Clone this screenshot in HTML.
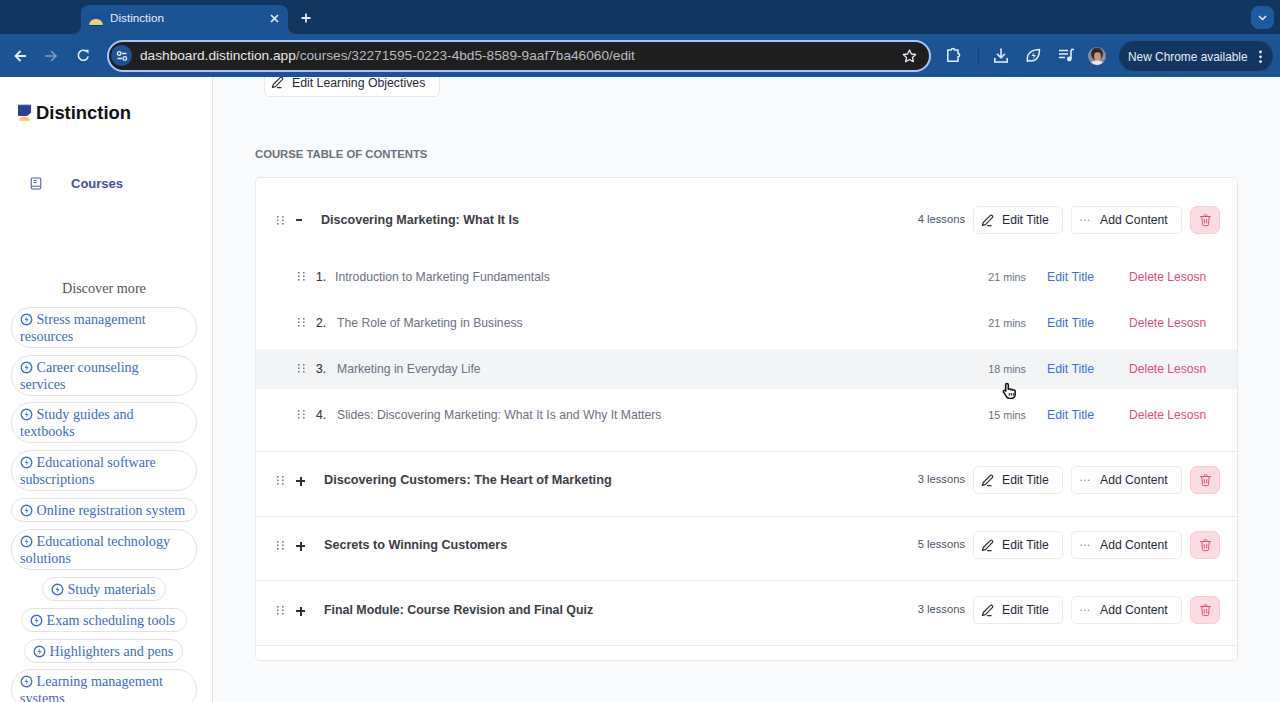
<!DOCTYPE html><html><head><meta charset="utf-8"><style>
*{margin:0;padding:0;box-sizing:border-box}
html,body{width:1280px;height:702px;overflow:hidden;background:#f9fafb;font-family:"Liberation Sans",sans-serif}
.abs{position:absolute}
.t{white-space:nowrap;position:absolute;line-height:1}
.chip{position:absolute;border:1px solid #e3e3e3;border-radius:20px;font-family:"Liberation Serif",serif;font-size:14.1px;color:#416dba;line-height:16.5px;padding:3px 7px 0 8px;background:#fff}
.chip svg{vertical-align:-2px;margin-right:0}
.nw{white-space:nowrap}
.sep{position:absolute;left:256px;width:981px;height:1px;background:#e9eaed}
.mtitle{font-size:12.7px;font-weight:bold;color:#3a3d44}
.btn{position:absolute;height:28px;border:1px solid #ececef;border-radius:5px;background:#fff}
.btxt{font-size:12.2px;color:#1f2937}
.del{position:absolute;width:30px;height:28px;border-radius:7px;background:#fcdce2;border:1px solid #f6cbd3}
.cnt{font-size:11.2px;color:#4b5563}
.ltitle{font-size:12.2px;color:#6b7280}
.lnum{font-size:12px;color:#363a42;-webkit-text-stroke:0.15px #363a42}
.mins{font-size:10.8px;color:#6b7280}
.edit{font-size:12.3px;color:#3a72d2}
.dell{font-size:12.1px;color:#dc4d83}
</style></head><body>
<div class="abs" style="left:0;top:77px;width:213px;height:625px;background:#fff;border-right:1px solid #e6e7ea"></div>
<svg class="abs" style="left:17px;top:104px" width="15" height="17" viewBox="0 0 15 17"><path d="M1.5 1.2h12v7.5l-3.5 2.8H1.5z" fill="#2c3f93" stroke="#2c3f93" stroke-width="1" stroke-linejoin="round"/><path d="M2 16.8c0-2.6 2.4-4.4 5.5-4.4s5.5 1.8 5.5 4.4z" fill="#f3c766"/></svg>
<div class="t" style="left:36px;top:104px;font-size:18.4px;font-weight:bold;color:#111">Distinction</div>
<svg class="abs" style="left:30px;top:177px" width="12" height="13" viewBox="0 0 12 13"><rect x="1.2" y="1" width="9.6" height="11" rx="1.5" fill="none" stroke="#4a5a9a" stroke-width="1.1"/><path d="M3.3 3.6h3.4M3.3 5.6h3.4M1.5 9.2h9" stroke="#4a5a9a" stroke-width="1"/></svg>
<div class="t" style="left:71px;top:177px;font-size:13px;font-weight:bold;color:#454f97">Courses</div>
<div class="t" style="left:62px;top:281px;font-family:'Liberation Serif',serif;font-size:14.2px;color:#555">Discover more</div>
<div class="chip" style="left:11px;top:307px;width:186px;height:41px"><svg width="13" height="13" viewBox="-0.4 -0.4 12.8 12.8"><circle cx="6" cy="6" r="5.2" fill="none" stroke="#416dba" stroke-width="1.35"/><path d="M6.6 2.8L4.2 6.6h1.9L5.5 9.2l2.4-3.8H6z" fill="#416dba"/></svg> Stress management<br>resources</div>
<div class="chip" style="left:11px;top:355px;width:186px;height:41px"><svg width="13" height="13" viewBox="-0.4 -0.4 12.8 12.8"><circle cx="6" cy="6" r="5.2" fill="none" stroke="#416dba" stroke-width="1.35"/><path d="M6.6 2.8L4.2 6.6h1.9L5.5 9.2l2.4-3.8H6z" fill="#416dba"/></svg> Career counseling<br>services</div>
<div class="chip" style="left:11px;top:402px;width:186px;height:41px"><svg width="13" height="13" viewBox="-0.4 -0.4 12.8 12.8"><circle cx="6" cy="6" r="5.2" fill="none" stroke="#416dba" stroke-width="1.35"/><path d="M6.6 2.8L4.2 6.6h1.9L5.5 9.2l2.4-3.8H6z" fill="#416dba"/></svg> Study guides and<br>textbooks</div>
<div class="chip" style="left:11px;top:450px;width:186px;height:41px"><svg width="13" height="13" viewBox="-0.4 -0.4 12.8 12.8"><circle cx="6" cy="6" r="5.2" fill="none" stroke="#416dba" stroke-width="1.35"/><path d="M6.6 2.8L4.2 6.6h1.9L5.5 9.2l2.4-3.8H6z" fill="#416dba"/></svg> Educational software<br>subscriptions</div>
<div class="chip nw" style="left:11px;top:498px;width:186px;height:24px"><svg width="13" height="13" viewBox="-0.4 -0.4 12.8 12.8"><circle cx="6" cy="6" r="5.2" fill="none" stroke="#416dba" stroke-width="1.35"/><path d="M6.6 2.8L4.2 6.6h1.9L5.5 9.2l2.4-3.8H6z" fill="#416dba"/></svg> Online registration system</div>
<div class="chip" style="left:11px;top:529px;width:186px;height:41px"><svg width="13" height="13" viewBox="-0.4 -0.4 12.8 12.8"><circle cx="6" cy="6" r="5.2" fill="none" stroke="#416dba" stroke-width="1.35"/><path d="M6.6 2.8L4.2 6.6h1.9L5.5 9.2l2.4-3.8H6z" fill="#416dba"/></svg> Educational technology<br>solutions</div>
<div class="chip nw" style="left:42px;top:577px;width:124px;height:24px"><svg width="13" height="13" viewBox="-0.4 -0.4 12.8 12.8"><circle cx="6" cy="6" r="5.2" fill="none" stroke="#416dba" stroke-width="1.35"/><path d="M6.6 2.8L4.2 6.6h1.9L5.5 9.2l2.4-3.8H6z" fill="#416dba"/></svg> Study materials</div>
<div class="chip nw" style="left:21px;top:608px;width:166px;height:24px"><svg width="13" height="13" viewBox="-0.4 -0.4 12.8 12.8"><circle cx="6" cy="6" r="5.2" fill="none" stroke="#416dba" stroke-width="1.35"/><path d="M6.6 2.8L4.2 6.6h1.9L5.5 9.2l2.4-3.8H6z" fill="#416dba"/></svg> Exam scheduling tools</div>
<div class="chip nw" style="left:24px;top:639px;width:159px;height:24px"><svg width="13" height="13" viewBox="-0.4 -0.4 12.8 12.8"><circle cx="6" cy="6" r="5.2" fill="none" stroke="#416dba" stroke-width="1.35"/><path d="M6.6 2.8L4.2 6.6h1.9L5.5 9.2l2.4-3.8H6z" fill="#416dba"/></svg> Highlighters and pens</div>
<div class="chip" style="left:11px;top:669px;width:186px;height:41px"><svg width="13" height="13" viewBox="-0.4 -0.4 12.8 12.8"><circle cx="6" cy="6" r="5.2" fill="none" stroke="#416dba" stroke-width="1.35"/><path d="M6.6 2.8L4.2 6.6h1.9L5.5 9.2l2.4-3.8H6z" fill="#416dba"/></svg> Learning management<br>systems</div>
<div class="abs" style="left:264px;top:66px;width:176px;height:31px;background:#fff;border:1px solid #e8e9ec;border-radius:5px"></div>
<svg class="abs" style="left:271px;top:75.5px" width="13" height="13" viewBox="0 0 13 13"><path d="M9.2 1.6c.6-.6 1.5-.6 2.1 0s.6 1.5 0 2.1L4.4 10.6l-3 .9.9-3z" fill="none" stroke="#2b2f36" stroke-width="1.2" stroke-linejoin="round"/><path d="M6.5 11.6h3.6" stroke="#2b2f36" stroke-width="1.2" stroke-linecap="round"/></svg>
<div class="t" style="left:292px;top:76.5px;font-size:12.3px;color:#1f2937">Edit Learning Objectives</div>
<div class="t" style="left:255px;top:149px;font-size:11.3px;font-weight:bold;color:#6b7280">COURSE TABLE OF CONTENTS</div>
<div class="abs" style="left:255px;top:177px;width:983px;height:484px;background:#fff;border:1px solid #e8e9ec;border-radius:5px"></div>
<div class="abs" style="left:1232px;top:178px;width:1px;height:482px;background:#f6f6f8"></div>
<svg class="abs" style="left:277px;top:215.5px" width="7" height="9"><rect x="0" y="0.0" width="1.6" height="1.6" fill="#7b7f86"/><rect x="0" y="3.5" width="1.6" height="1.6" fill="#7b7f86"/><rect x="0" y="7.0" width="1.6" height="1.6" fill="#7b7f86"/><rect x="5" y="0.0" width="1.6" height="1.6" fill="#7b7f86"/><rect x="5" y="3.5" width="1.6" height="1.6" fill="#7b7f86"/><rect x="5" y="7.0" width="1.6" height="1.6" fill="#7b7f86"/></svg>
<div class="abs" style="left:296px;top:219px;width:6px;height:2px;background:#3a3a3a"></div>
<div class="t mtitle" style="left:321px;top:214px;font-size:12.55px">Discovering Marketing: What It Is</div>
<div class="t cnt" style="right:315px;top:214px">4 lessons</div>
<div class="btn" style="left:973px;top:206px;width:90px"></div>
<svg class="abs" style="left:981px;top:213.5px" width="13" height="13" viewBox="0 0 13 13"><path d="M9.2 1.6c.6-.6 1.5-.6 2.1 0s.6 1.5 0 2.1L4.4 10.6l-3 .9.9-3z" fill="none" stroke="#2b2f36" stroke-width="1.2" stroke-linejoin="round"/><path d="M6.5 11.6h3.6" stroke="#2b2f36" stroke-width="1.2" stroke-linecap="round"/></svg>
<div class="t btxt" style="left:1002px;top:214px">Edit Title</div>
<div class="btn" style="left:1071px;top:206px;width:111px"></div>
<svg class="abs" style="left:1080px;top:219px" width="12" height="3"><circle cx="1.3" cy="1.3" r=".8" fill="#8a8f98"/><circle cx="5" cy="1.3" r=".8" fill="#8a8f98"/><circle cx="8.7" cy="1.3" r=".8" fill="#8a8f98"/></svg>
<div class="t btxt" style="left:1100px;top:214px">Add Content</div>
<div class="del" style="left:1190px;top:206px"></div>
<svg class="abs" style="left:1198.5px;top:212.5px" width="13" height="14" viewBox="0 0 13 14"><path d="M1.5 3.5h10M4.8 3.5c0-1.3.6-2 1.7-2s1.7.7 1.7 2M2.8 3.7l.7 8c.1.6.5.9 1 .9h4c.5 0 .9-.3 1-.9l.7-8M5.3 6.5v3.5M7.7 6.5v3.5" fill="none" stroke="#d65577" stroke-width="1" stroke-linecap="round" stroke-linejoin="round"/></svg>
<div class="abs" style="left:256px;top:349px;width:981px;height:40px;background:#f3f4f6"></div>
<svg class="abs" style="left:298px;top:272px" width="7" height="9"><rect x="0" y="0.0" width="1.6" height="1.6" fill="#7b7f86"/><rect x="0" y="3.5" width="1.6" height="1.6" fill="#7b7f86"/><rect x="0" y="7.0" width="1.6" height="1.6" fill="#7b7f86"/><rect x="5" y="0.0" width="1.6" height="1.6" fill="#7b7f86"/><rect x="5" y="3.5" width="1.6" height="1.6" fill="#7b7f86"/><rect x="5" y="7.0" width="1.6" height="1.6" fill="#7b7f86"/></svg>
<div class="t lnum" style="left:316px;top:271px">1.</div>
<div class="t ltitle" style="left:335px;top:271px">Introduction to Marketing Fundamentals</div>
<div class="t mins" style="right:254px;top:271.5px">21 mins</div>
<div class="t edit" style="left:1047px;top:271px">Edit Title</div>
<div class="t dell" style="left:1129px;top:271px">Delete Lesosn</div>
<svg class="abs" style="left:298px;top:318px" width="7" height="9"><rect x="0" y="0.0" width="1.6" height="1.6" fill="#7b7f86"/><rect x="0" y="3.5" width="1.6" height="1.6" fill="#7b7f86"/><rect x="0" y="7.0" width="1.6" height="1.6" fill="#7b7f86"/><rect x="5" y="0.0" width="1.6" height="1.6" fill="#7b7f86"/><rect x="5" y="3.5" width="1.6" height="1.6" fill="#7b7f86"/><rect x="5" y="7.0" width="1.6" height="1.6" fill="#7b7f86"/></svg>
<div class="t lnum" style="left:316px;top:317px">2.</div>
<div class="t ltitle" style="left:337px;top:317px">The Role of Marketing in Business</div>
<div class="t mins" style="right:254px;top:317.5px">21 mins</div>
<div class="t edit" style="left:1047px;top:317px">Edit Title</div>
<div class="t dell" style="left:1129px;top:317px">Delete Lesosn</div>
<svg class="abs" style="left:298px;top:364px" width="7" height="9"><rect x="0" y="0.0" width="1.6" height="1.6" fill="#7b7f86"/><rect x="0" y="3.5" width="1.6" height="1.6" fill="#7b7f86"/><rect x="0" y="7.0" width="1.6" height="1.6" fill="#7b7f86"/><rect x="5" y="0.0" width="1.6" height="1.6" fill="#7b7f86"/><rect x="5" y="3.5" width="1.6" height="1.6" fill="#7b7f86"/><rect x="5" y="7.0" width="1.6" height="1.6" fill="#7b7f86"/></svg>
<div class="t lnum" style="left:316px;top:363px">3.</div>
<div class="t ltitle" style="left:337px;top:363px">Marketing in Everyday Life</div>
<div class="t mins" style="right:254px;top:363.5px">18 mins</div>
<div class="t edit" style="left:1047px;top:363px">Edit Title</div>
<div class="t dell" style="left:1129px;top:363px">Delete Lesosn</div>
<svg class="abs" style="left:298px;top:410px" width="7" height="9"><rect x="0" y="0.0" width="1.6" height="1.6" fill="#7b7f86"/><rect x="0" y="3.5" width="1.6" height="1.6" fill="#7b7f86"/><rect x="0" y="7.0" width="1.6" height="1.6" fill="#7b7f86"/><rect x="5" y="0.0" width="1.6" height="1.6" fill="#7b7f86"/><rect x="5" y="3.5" width="1.6" height="1.6" fill="#7b7f86"/><rect x="5" y="7.0" width="1.6" height="1.6" fill="#7b7f86"/></svg>
<div class="t lnum" style="left:316px;top:409px">4.</div>
<div class="t ltitle" style="left:337px;top:409px">Slides: Discovering Marketing: What It Is and Why It Matters</div>
<div class="t mins" style="right:254px;top:409.5px">15 mins</div>
<div class="t edit" style="left:1047px;top:409px">Edit Title</div>
<div class="t dell" style="left:1129px;top:409px">Delete Lesosn</div>
<div class="sep" style="top:451px"></div>
<svg class="abs" style="left:277px;top:475.5px" width="7" height="9"><rect x="0" y="0.0" width="1.6" height="1.6" fill="#7b7f86"/><rect x="0" y="3.5" width="1.6" height="1.6" fill="#7b7f86"/><rect x="0" y="7.0" width="1.6" height="1.6" fill="#7b7f86"/><rect x="5" y="0.0" width="1.6" height="1.6" fill="#7b7f86"/><rect x="5" y="3.5" width="1.6" height="1.6" fill="#7b7f86"/><rect x="5" y="7.0" width="1.6" height="1.6" fill="#7b7f86"/></svg>
<div class="abs" style="left:296px;top:480px;width:9px;height:2px;background:#2e3035"></div>
<div class="abs" style="left:299.5px;top:476.5px;width:2px;height:9px;background:#2e3035"></div>
<div class="t mtitle" style="left:324px;top:474px;font-size:12.7px">Discovering Customers: The Heart of Marketing</div>
<div class="t cnt" style="right:315px;top:474px">3 lessons</div>
<div class="btn" style="left:973px;top:466px;width:90px"></div>
<svg class="abs" style="left:981px;top:473.5px" width="13" height="13" viewBox="0 0 13 13"><path d="M9.2 1.6c.6-.6 1.5-.6 2.1 0s.6 1.5 0 2.1L4.4 10.6l-3 .9.9-3z" fill="none" stroke="#2b2f36" stroke-width="1.2" stroke-linejoin="round"/><path d="M6.5 11.6h3.6" stroke="#2b2f36" stroke-width="1.2" stroke-linecap="round"/></svg>
<div class="t btxt" style="left:1002px;top:474px">Edit Title</div>
<div class="btn" style="left:1071px;top:466px;width:111px"></div>
<svg class="abs" style="left:1080px;top:479px" width="12" height="3"><circle cx="1.3" cy="1.3" r=".8" fill="#8a8f98"/><circle cx="5" cy="1.3" r=".8" fill="#8a8f98"/><circle cx="8.7" cy="1.3" r=".8" fill="#8a8f98"/></svg>
<div class="t btxt" style="left:1100px;top:474px">Add Content</div>
<div class="del" style="left:1190px;top:466px"></div>
<svg class="abs" style="left:1198.5px;top:472.5px" width="13" height="14" viewBox="0 0 13 14"><path d="M1.5 3.5h10M4.8 3.5c0-1.3.6-2 1.7-2s1.7.7 1.7 2M2.8 3.7l.7 8c.1.6.5.9 1 .9h4c.5 0 .9-.3 1-.9l.7-8M5.3 6.5v3.5M7.7 6.5v3.5" fill="none" stroke="#d65577" stroke-width="1" stroke-linecap="round" stroke-linejoin="round"/></svg>
<div class="sep" style="top:516px"></div>
<svg class="abs" style="left:277px;top:540.5px" width="7" height="9"><rect x="0" y="0.0" width="1.6" height="1.6" fill="#7b7f86"/><rect x="0" y="3.5" width="1.6" height="1.6" fill="#7b7f86"/><rect x="0" y="7.0" width="1.6" height="1.6" fill="#7b7f86"/><rect x="5" y="0.0" width="1.6" height="1.6" fill="#7b7f86"/><rect x="5" y="3.5" width="1.6" height="1.6" fill="#7b7f86"/><rect x="5" y="7.0" width="1.6" height="1.6" fill="#7b7f86"/></svg>
<div class="abs" style="left:296px;top:545px;width:9px;height:2px;background:#2e3035"></div>
<div class="abs" style="left:299.5px;top:541.5px;width:2px;height:9px;background:#2e3035"></div>
<div class="t mtitle" style="left:324px;top:539px;font-size:12.6px">Secrets to Winning Customers</div>
<div class="t cnt" style="right:315px;top:539px">5 lessons</div>
<div class="btn" style="left:973px;top:531px;width:90px"></div>
<svg class="abs" style="left:981px;top:538.5px" width="13" height="13" viewBox="0 0 13 13"><path d="M9.2 1.6c.6-.6 1.5-.6 2.1 0s.6 1.5 0 2.1L4.4 10.6l-3 .9.9-3z" fill="none" stroke="#2b2f36" stroke-width="1.2" stroke-linejoin="round"/><path d="M6.5 11.6h3.6" stroke="#2b2f36" stroke-width="1.2" stroke-linecap="round"/></svg>
<div class="t btxt" style="left:1002px;top:539px">Edit Title</div>
<div class="btn" style="left:1071px;top:531px;width:111px"></div>
<svg class="abs" style="left:1080px;top:544px" width="12" height="3"><circle cx="1.3" cy="1.3" r=".8" fill="#8a8f98"/><circle cx="5" cy="1.3" r=".8" fill="#8a8f98"/><circle cx="8.7" cy="1.3" r=".8" fill="#8a8f98"/></svg>
<div class="t btxt" style="left:1100px;top:539px">Add Content</div>
<div class="del" style="left:1190px;top:531px"></div>
<svg class="abs" style="left:1198.5px;top:537.5px" width="13" height="14" viewBox="0 0 13 14"><path d="M1.5 3.5h10M4.8 3.5c0-1.3.6-2 1.7-2s1.7.7 1.7 2M2.8 3.7l.7 8c.1.6.5.9 1 .9h4c.5 0 .9-.3 1-.9l.7-8M5.3 6.5v3.5M7.7 6.5v3.5" fill="none" stroke="#d65577" stroke-width="1" stroke-linecap="round" stroke-linejoin="round"/></svg>
<div class="sep" style="top:580px"></div>
<svg class="abs" style="left:277px;top:605.5px" width="7" height="9"><rect x="0" y="0.0" width="1.6" height="1.6" fill="#7b7f86"/><rect x="0" y="3.5" width="1.6" height="1.6" fill="#7b7f86"/><rect x="0" y="7.0" width="1.6" height="1.6" fill="#7b7f86"/><rect x="5" y="0.0" width="1.6" height="1.6" fill="#7b7f86"/><rect x="5" y="3.5" width="1.6" height="1.6" fill="#7b7f86"/><rect x="5" y="7.0" width="1.6" height="1.6" fill="#7b7f86"/></svg>
<div class="abs" style="left:296px;top:610px;width:9px;height:2px;background:#2e3035"></div>
<div class="abs" style="left:299.5px;top:606.5px;width:2px;height:9px;background:#2e3035"></div>
<div class="t mtitle" style="left:324px;top:604px;font-size:12.4px">Final Module: Course Revision and Final Quiz</div>
<div class="t cnt" style="right:315px;top:604px">3 lessons</div>
<div class="btn" style="left:973px;top:596px;width:90px"></div>
<svg class="abs" style="left:981px;top:603.5px" width="13" height="13" viewBox="0 0 13 13"><path d="M9.2 1.6c.6-.6 1.5-.6 2.1 0s.6 1.5 0 2.1L4.4 10.6l-3 .9.9-3z" fill="none" stroke="#2b2f36" stroke-width="1.2" stroke-linejoin="round"/><path d="M6.5 11.6h3.6" stroke="#2b2f36" stroke-width="1.2" stroke-linecap="round"/></svg>
<div class="t btxt" style="left:1002px;top:604px">Edit Title</div>
<div class="btn" style="left:1071px;top:596px;width:111px"></div>
<svg class="abs" style="left:1080px;top:609px" width="12" height="3"><circle cx="1.3" cy="1.3" r=".8" fill="#8a8f98"/><circle cx="5" cy="1.3" r=".8" fill="#8a8f98"/><circle cx="8.7" cy="1.3" r=".8" fill="#8a8f98"/></svg>
<div class="t btxt" style="left:1100px;top:604px">Add Content</div>
<div class="del" style="left:1190px;top:596px"></div>
<svg class="abs" style="left:1198.5px;top:602.5px" width="13" height="14" viewBox="0 0 13 14"><path d="M1.5 3.5h10M4.8 3.5c0-1.3.6-2 1.7-2s1.7.7 1.7 2M2.8 3.7l.7 8c.1.6.5.9 1 .9h4c.5 0 .9-.3 1-.9l.7-8M5.3 6.5v3.5M7.7 6.5v3.5" fill="none" stroke="#d65577" stroke-width="1" stroke-linecap="round" stroke-linejoin="round"/></svg>
<div class="sep" style="top:645px"></div>
<svg class="abs" style="left:1002px;top:382px" width="16" height="17" viewBox="0 0 16 17"><path d="M5 1.5c.8 0 1.3.6 1.3 1.3v4.6c.3-.4.7-.6 1.2-.6.6 0 1.1.4 1.2 1 .3-.3.6-.5 1.1-.5.6 0 1.1.4 1.2 1 .2-.2.5-.3.9-.3.7 0 1.3.6 1.3 1.3v2.8c0 2.5-1.6 4.3-4 4.3H7.6c-1.3 0-2.2-.5-3-1.6L1.6 10.2c-.5-.6-.3-1.4.3-1.7.5-.3 1.2-.1 1.6.4l.2.3V2.8C3.7 2.1 4.2 1.5 5 1.5z" fill="#fff" stroke="#111" stroke-width="1.5" stroke-linejoin="round"/><path d="M7.3 11v2.7M9.3 11v2.7M11.3 11v2.7" stroke="#111" stroke-width="1"/></svg>
<div class="abs" style="left:0;top:0;width:1280px;height:34px;background:#12365f"></div>
<div class="abs" style="left:81px;top:5px;width:207px;height:30px;background:#1b5394;border-radius:8px 8px 0 0"></div>
<svg class="abs" style="left:73px;top:26px" width="8" height="8"><path d="M0 8 A8 8 0 0 0 8 0 V8z" fill="#1b5394"/></svg>
<svg class="abs" style="left:288px;top:26px" width="8" height="8"><path d="M8 8 A8 8 0 0 1 0 0 V8z" fill="#1b5394"/></svg>
<svg class="abs" style="left:88px;top:12px" width="16" height="15" viewBox="0 0 16 15"><path d="M2.5 1.5h11v4l-2 1.5H2.5z" fill="#2c3f93" opacity=".3"/><path d="M1.2 13c0-3.6 3-6 6.8-6s6.8 2.4 6.8 6z" fill="#f0cd70"/><path d="M1.2 13.5h13.6" stroke="#143a70" stroke-width="1"/></svg>
<div class="t" style="left:110px;top:12px;font-size:11.7px;color:#e6edf8">Distinction</div>
<svg class="abs" style="left:269.5px;top:13.5px" width="9" height="9"><path d="M1 1l7 7M8 1L1 8" stroke="#e6edf8" stroke-width="1.7"/></svg>
<svg class="abs" style="left:300.5px;top:12.5px" width="10" height="10"><path d="M5 0.5v9M0.5 5h9" stroke="#e6edf8" stroke-width="1.8"/></svg>
<div class="abs" style="left:1251px;top:6px;width:23px;height:23px;border-radius:8px;background:#1d5aa0"></div>
<svg class="abs" style="left:1258px;top:15px" width="9" height="6"><path d="M1 1l3.5 3.5L8 1" fill="none" stroke="#e6edf8" stroke-width="1.5"/></svg>
<div class="abs" style="left:0;top:34px;width:1280px;height:43px;background:#1b5394"></div>
<svg class="abs" style="left:13px;top:49px" width="14" height="14" viewBox="0 0 14 14"><path d="M13 7H2.5M7.5 2L2.5 7l5 5" fill="none" stroke="#e6edf8" stroke-width="1.9"/></svg>
<svg class="abs" style="left:44px;top:49px" width="14" height="14" viewBox="0 0 14 14"><path d="M1 7h11M7 2l5 5-5 5" fill="none" stroke="#7f9cc9" stroke-width="1.6"/></svg>
<svg class="abs" style="left:76px;top:48px" width="15" height="15" viewBox="0 0 15 15"><path d="M12.2 8.3A5 5 0 1 1 10.8 3.7" fill="none" stroke="#e6edf8" stroke-width="1.6"/><path d="M8.5 1.8h4v4z" fill="#e6edf8"/></svg>
<div class="abs" style="left:107px;top:40px;width:824px;height:32px;border:2px solid #a8c7fa;border-radius:16px;background:#1f1f1f"></div>
<div class="abs" style="left:111px;top:45px;width:21px;height:21px;border-radius:11px;background:#1b5394"></div>
<svg class="abs" style="left:114.5px;top:48.5px" width="14" height="14" viewBox="0 0 14 14"><circle cx="4.2" cy="4.5" r="1.8" fill="none" stroke="#e6edf8" stroke-width="1.3"/><path d="M7 4.5h4.5M2.5 9.5h4.5" stroke="#e6edf8" stroke-width="1.3"/><circle cx="9.8" cy="9.5" r="1.8" fill="none" stroke="#e6edf8" stroke-width="1.3"/></svg>
<div class="t" style="left:140px;top:49px;font-size:13.68px;color:#e8e8e8">dashboard.distinction.app<span style="color:#b9bcc2">/courses/32271595-0223-4bd5-8589-9aaf7ba46060/edit</span></div>
<svg class="abs" style="left:902px;top:49px" width="15" height="14" viewBox="0 0 15 14"><path d="M7.5 1l1.9 4 4.3.5-3.2 2.9.9 4.3-3.9-2.2-3.9 2.2.9-4.3L1.3 5.5l4.3-.5z" fill="none" stroke="#e6edf8" stroke-width="1.3" stroke-linejoin="round"/></svg>
<svg class="abs" style="left:945px;top:46px" width="17" height="17" viewBox="0 0 17 17"><path d="M2.8 4H6.3a1.6 1.6 0 0 1 3.2 0H13V7.6a1.6 1.6 0 0 1 0 3.2V15.2H2.8Z" fill="none" stroke="#e6edf8" stroke-width="1.5" stroke-linejoin="round"/></svg>
<div class="abs" style="left:978px;top:47px;width:1px;height:18px;background:#143f72"></div>
<svg class="abs" style="left:993px;top:47px" width="16" height="17" viewBox="0 0 16 17"><path d="M8 1.5v9M4 6.8l4 4 4-4M1.8 11v4h12.4v-4" fill="none" stroke="#e6edf8" stroke-width="1.6"/></svg>
<svg class="abs" style="left:1025px;top:47px" width="17" height="17" viewBox="0 0 17 17"><path d="M2.5 14.5 C1.5 9 3.5 3 14.5 2.5 C14.5 12 9 15 4 13.5z" fill="none" stroke="#e6edf8" stroke-width="1.5" stroke-linejoin="round"/><path d="M9.5 5L6.5 9h2.5l-1.5 3.5 3.5-4.5H8.5z" fill="#e6edf8"/></svg>
<svg class="abs" style="left:1058px;top:48px" width="17" height="15" viewBox="0 0 17 15"><path d="M1 2.5h9M1 6h9M1 9.5h6" stroke="#e6edf8" stroke-width="1.6"/><path d="M13 2v8.5" stroke="#e6edf8" stroke-width="1.6"/><path d="M13 1.5h3" stroke="#e6edf8" stroke-width="1.6"/><circle cx="11.3" cy="11" r="2.4" fill="#e6edf8"/></svg>
<svg class="abs" style="left:1088px;top:47px" width="18" height="18" viewBox="0 0 18 18"><defs><clipPath id="av"><circle cx="9" cy="9" r="9"/></clipPath></defs><g clip-path="url(#av)"><rect width="18" height="18" fill="#8c8f99"/><ellipse cx="9" cy="7" rx="6" ry="6.5" fill="#3a2a25"/><ellipse cx="9.5" cy="9.5" rx="3.4" ry="4.4" fill="#c8967a"/><path d="M2 18c1-3.5 4-4.5 7-4.5s6 1 7 4.5z" fill="#e9e6ea"/><path d="M4.5 5.5c1.5-2.5 6-3 8.5-.5-2 .2-5.5.3-8.5.5z" fill="#2a1e1b"/></g></svg>
<div class="abs" style="left:1119px;top:41px;width:154px;height:30px;border-radius:15px;background:#12365f"></div>
<div class="t" style="left:1128px;top:51.5px;font-size:11.9px;color:#e6edf8">New Chrome available</div>
<svg class="abs" style="left:1257.5px;top:49.5px" width="5" height="14"><circle cx="2.5" cy="2" r="1.4" fill="#e6edf8"/><circle cx="2.5" cy="6.8" r="1.4" fill="#e6edf8"/><circle cx="2.5" cy="11.6" r="1.4" fill="#e6edf8"/></svg>
</body></html>
